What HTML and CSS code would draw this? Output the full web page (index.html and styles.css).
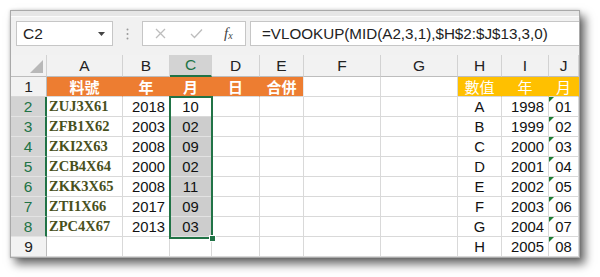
FILE: index.html
```html
<!DOCTYPE html>
<html>
<head>
<meta charset="utf-8">
<link rel="stylesheet" href="styles.css">
</head>
<body>
<div class="win">
  <div class="topstrip"></div>
  <div class="fbar">
    <div class="namebox"><span>C2</span>
      <svg class="arrow" width="7" height="4" viewBox="0 0 7 4"><path d="M0 0H7L3.5 4Z" fill="#444"/></svg>
    </div>
    <svg class="dots" width="3" height="12" viewBox="0 0 3 12"><circle cx="1.5" cy="1.5" r="1" fill="#9a9a9a"/><circle cx="1.5" cy="6" r="1" fill="#9a9a9a"/><circle cx="1.5" cy="10.5" r="1" fill="#9a9a9a"/></svg>
    <div class="fnbox">
      <svg width="11" height="11" viewBox="0 0 11 11"><path d="M1 1L10 10M10 1L1 10" stroke="#bdbdbd" stroke-width="1.3" fill="none"/></svg>
      <svg width="13" height="11" viewBox="0 0 13 11"><path d="M1 6L4.5 9.5L12 1.5" stroke="#bdbdbd" stroke-width="1.3" fill="none"/></svg>
      <span class="fx"><i>f</i><sub>x</sub></span>
    </div>
    <div class="formula">=VLOOKUP(MID(A2,3,1),$H$2:$J$13,3,0)</div>
  </div>
  <div class="sheet">
    <div class="grid">
      <div class="ch corner"><svg width="13" height="13" viewBox="0 0 13 13"><path d="M13 0V13H0Z" fill="#b8b8b8"/></svg></div>
      <div class="ch">A</div><div class="ch">B</div><div class="ch sel">C</div><div class="ch">D</div><div class="ch">E</div><div class="ch">F</div><div class="ch">G</div><div class="ch">H</div><div class="ch">I</div><div class="ch">J</div>

      <div class="rh">1</div>
      <div class="c or">料號</div><div class="c or">年</div><div class="c or">月</div><div class="c or">日</div><div class="c or last">合併</div>
      <div class="c"></div><div class="c"></div>
      <div class="c gd">數值</div><div class="c gd">年</div><div class="c gd">月</div>

      <div class="rh hl">2</div>
      <div class="c code">ZUJ3X61</div><div class="c num">2018</div><div class="c mid">10</div><div class="c"></div><div class="c"></div><div class="c"></div><div class="c"></div><div class="c mid">A</div><div class="c num">1998</div><div class="c mid tx">01</div>

      <div class="rh hl">3</div>
      <div class="c code">ZFB1X62</div><div class="c num">2003</div><div class="c mid shade">02</div><div class="c"></div><div class="c"></div><div class="c"></div><div class="c"></div><div class="c mid">B</div><div class="c num">1999</div><div class="c mid tx">02</div>

      <div class="rh hl">4</div>
      <div class="c code">ZKI2X63</div><div class="c num">2008</div><div class="c mid shade">09</div><div class="c"></div><div class="c"></div><div class="c"></div><div class="c"></div><div class="c mid">C</div><div class="c num">2000</div><div class="c mid tx">03</div>

      <div class="rh hl">5</div>
      <div class="c code">ZCB4X64</div><div class="c num">2000</div><div class="c mid shade">02</div><div class="c"></div><div class="c"></div><div class="c"></div><div class="c"></div><div class="c mid">D</div><div class="c num">2001</div><div class="c mid tx">04</div>

      <div class="rh hl">6</div>
      <div class="c code">ZKK3X65</div><div class="c num">2008</div><div class="c mid shade">11</div><div class="c"></div><div class="c"></div><div class="c"></div><div class="c"></div><div class="c mid">E</div><div class="c num">2002</div><div class="c mid tx">05</div>

      <div class="rh hl">7</div>
      <div class="c code">ZTI1X66</div><div class="c num">2017</div><div class="c mid shade">09</div><div class="c"></div><div class="c"></div><div class="c"></div><div class="c"></div><div class="c mid">F</div><div class="c num">2003</div><div class="c mid tx">06</div>

      <div class="rh hl">8</div>
      <div class="c code">ZPC4X67</div><div class="c num">2013</div><div class="c mid shade">03</div><div class="c"></div><div class="c"></div><div class="c"></div><div class="c"></div><div class="c mid">G</div><div class="c num">2004</div><div class="c mid tx">07</div>

      <div class="rh">9</div>
      <div class="c"></div><div class="c"></div><div class="c"></div><div class="c"></div><div class="c"></div><div class="c"></div><div class="c"></div><div class="c mid">H</div><div class="c num">2005</div><div class="c mid tx">08</div>
    </div>
    <div class="selbox"></div>
    <div class="handle"></div>
  </div>
</div>
</body>
</html>
```

FILE: styles.css
```css
html, body {
  margin: 0;
  padding: 0;
  background: #ffffff;
}
body {
  width: 600px;
  height: 277px;
  overflow: hidden;
  font-family: "Liberation Sans", Arial, sans-serif;
}
.win {
  margin: 10px 0 0 10px;
  width: 568px;
  height: 246px;
  border: 1px solid #a9a9a9;
  background: #f2f2f2;
  box-shadow: 0 0 3px rgba(0,0,0,0.18), 5px 6px 9px rgba(0,0,0,0.6);
  display: flex;
  flex-direction: column;
}
.topstrip {
  height: 5px;
  background: #e6e6e6;
  border-bottom: 1px solid #fbfbfb;
}
.fbar {
  height: 38px;
  box-sizing: border-box;
  padding: 4px 0 0 5px;
  display: flex;
  align-items: flex-start;
  background: #f1f1f1;
}
.namebox {
  width: 97px;
  height: 25px;
  box-sizing: border-box;
  border: 1px solid #c6c6c6;
  background: #fff;
  display: flex;
  align-items: center;
  justify-content: space-between;
  padding: 0 7px 0 6px;
  font-size: 15.5px;
  color: #222;
}
.namebox .arrow { margin-top: 1px; }
.dots {
  margin: 7px 13px 0 13px;
}
.fnbox {
  width: 104px;
  height: 25px;
  box-sizing: border-box;
  border: 1px solid #c6c6c6;
  background: #fff;
  display: flex;
  align-items: center;
  padding: 0 0 0 12px;
}
.fnbox svg:nth-child(1) { margin-right: 24px; }
.fnbox svg:nth-child(2) { margin-right: 21px; }
.fx {
  font-family: "Liberation Serif", serif;
  font-size: 15px;
  color: #444;
  line-height: 1;
}
.fx sub { font-size: 10px; font-style: italic; vertical-align: -1px; }
.formula {
  margin-left: 4px;
  flex: 1;
  height: 25px;
  box-sizing: border-box;
  border: 1px solid #c6c6c6;
  border-right: none;
  background: #fff;
  font-size: 15.2px;
  color: #222;
  padding-left: 11px;
  line-height: 23px;
  white-space: nowrap;
}
.sheet {
  position: relative;
  flex: 1;
  background: #fff;
}
.grid {
  display: grid;
  grid-template-columns: 36px 76px 47px 42px 48px 44px 77px 77px 44px 47px 30px;
  grid-template-rows: 22px repeat(9, 20px);
}
.grid > div {
  box-sizing: border-box;
  display: flex;
  align-items: center;
  overflow: hidden;
  white-space: nowrap;
}
.ch {
  background: #f2f2f2;
  border-right: 1px solid #d2d2d2;
  border-bottom: 1px solid #bdbdbd;
  justify-content: center;
  font-size: 15.5px;
  color: #222;
}
.ch.sel {
  background: #d3d3d3;
  color: #217346;
  border-bottom: 2px solid #217346;
}
.ch.corner {
  justify-content: flex-end;
  align-items: flex-end;
  padding: 0 3px 3px 0;
}
.ch.corner svg { display: block; }
.rh {
  background: #f2f2f2;
  border-right: 1px solid #bdbdbd;
  border-bottom: 1px solid #d8d8d8;
  justify-content: center;
  font-size: 15.5px;
  color: #222;
}
.rh.hl {
  background: #d3d3d3;
  color: #217346;
  border-right: 2px solid #217346;
  border-bottom: 1px solid #e3e3e3;
}
.c {
  position: relative;
  border-right: 1px solid #d9d9d9;
  border-bottom: 1px solid #d9d9d9;
  font-size: 14.8px;
  color: #111;
}
.or {
  background: #ed7d31;
  border-right-color: #ed7d31;
  color: #fff;
  font-weight: bold;
  justify-content: center;
  font-family: "Liberation Sans", "Noto Sans CJK TC", sans-serif;
  font-size: 15px;
}
.or.last { border-right-color: #e9e9e9; }
.gd {
  background: #ffc000;
  border-right-color: #ffc000;
  color: #fff;
  justify-content: center;
  font-family: "Liberation Sans", "Noto Sans CJK TC", sans-serif;
  font-size: 15px;
}
.code {
  font-family: "Liberation Serif", "Times New Roman", serif;
  font-weight: bold;
  font-size: 14.5px;
  color: #48501c;
  padding-left: 2px;
}
.num {
  justify-content: flex-end;
  padding-right: 4px;
}
.mid {
  justify-content: center;
}
.shade {
  background: #cdcdcd;
  border-right-color: #cdcdcd;
  border-bottom-color: #e2e2e2;
}
.tx::before {
  content: "";
  position: absolute;
  left: 0;
  top: 0;
  border-top: 5px solid #1e7e34;
  border-right: 5px solid transparent;
}
.selbox {
  position: absolute;
  left: 158px;
  top: 41px;
  width: 44px;
  height: 143px;
  box-sizing: border-box;
  border: 2px solid #217346;
  pointer-events: none;
}
.handle {
  position: absolute;
  left: 198px;
  top: 180px;
  width: 5px;
  height: 5px;
  background: #217346;
  border: 1px solid #fff;
}
```
